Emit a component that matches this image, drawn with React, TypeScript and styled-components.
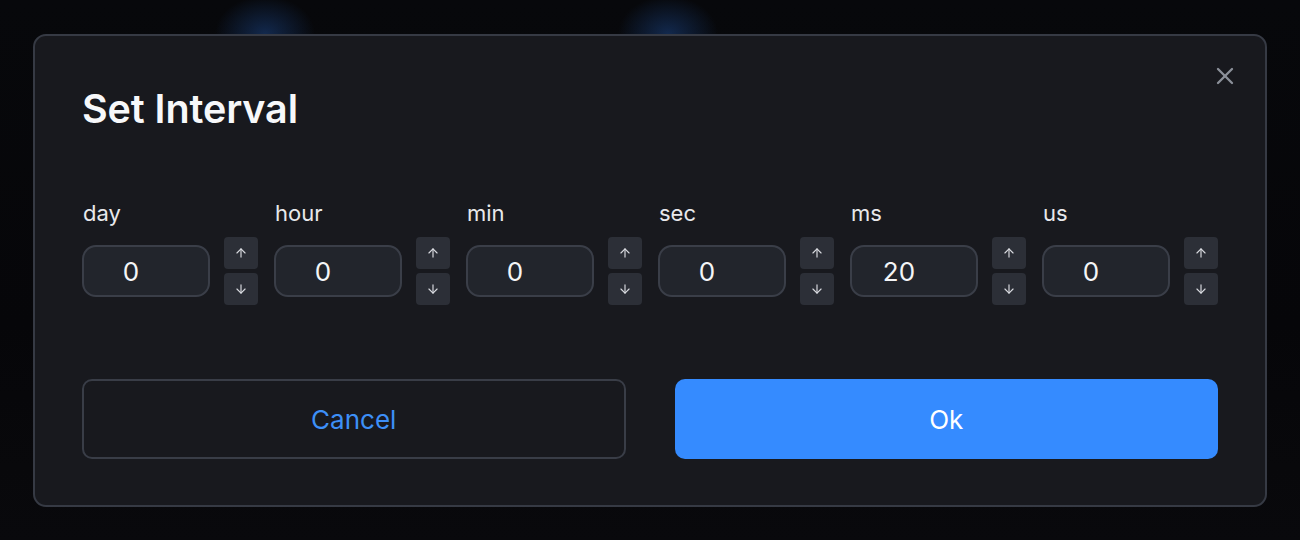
import React from "react";
import styled, { createGlobalStyle } from "styled-components";
import { ArrowUp, ArrowDown, X } from "lucide-react";

const GlobalStyle = createGlobalStyle`
  html, body {
    margin: 0;
    padding: 0;
    height: 100%;
  }

  body {
    font-family: Inter, "Noto Sans", sans-serif;
    background-color: #060609;
    background-image:
      radial-gradient(ellipse 50px 38px at 265px 34px, rgba(22, 52, 100, 0.75), rgba(22, 52, 100, 0) 100%),
      radial-gradient(ellipse 50px 38px at 668px 34px, rgba(22, 52, 100, 0.75), rgba(22, 52, 100, 0) 100%),
      linear-gradient(180deg, #07080b 0%, #060609 60%, #09090c 100%);
    background-repeat: no-repeat;
  }

  #root {
    width: 1300px;
    height: 540px;
  }
`;

const Page = styled.div`
  width: 1300px;
  height: 540px;
  padding: 34px 33px 33px;
  box-sizing: border-box;
`;

const Dialog = styled.div`
  position: relative;
  height: 473px;
  box-sizing: border-box;
  background: #18191e;
  border: 2px solid #363a44;
  border-radius: 13px;
  padding: 50px 47px 0;
  display: flex;
  flex-direction: column;
`;

const CloseButton = styled.button`
  position: absolute;
  top: 24px;
  right: 24px;
  width: 32px;
  height: 32px;
  padding: 0;
  border: none;
  background: transparent;
  color: #8b9099;
  display: flex;
  align-items: center;
  justify-content: center;
  cursor: pointer;
`;

const Title = styled.h2`
  margin: 0;
  font-size: 39.5px;
  line-height: 47px;
  font-weight: 600;
  color: #f7f8fa;
  letter-spacing: -0.1px;
`;

const Fields = styled.div`
  display: grid;
  grid-template-columns: repeat(6, 176px);
  column-gap: 16px;
  margin-top: 67px;
`;

const Field = styled.div`
  display: flex;
  flex-direction: column;
`;

const Label = styled.label`
  font-size: 22px;
  line-height: 27px;
  color: #e8e9ec;
  margin-left: 1px;
`;

const Control = styled.div`
  display: flex;
  align-items: center;
  gap: 14px;
  margin-top: 10px;
`;

const ValueBox = styled.div`
  width: 128px;
  height: 52px;
  box-sizing: border-box;
  background: #22252c;
  border: 2px solid #3a3e48;
  border-radius: 14px;
  display: flex;
  align-items: center;
  padding-right: 30px;
  justify-content: center;
  font-size: 26px;
  color: #f4f5f7;
`;

const Spinner = styled.div`
  display: flex;
  flex-direction: column;
  gap: 4px;
`;

const SpinButton = styled.button`
  width: 34px;
  height: 32px;
  padding: 0;
  border: none;
  border-radius: 4px;
  background: #2c2f37;
  color: #d9dbe0;
  display: flex;
  align-items: center;
  justify-content: center;
  cursor: pointer;
`;

const Actions = styled.div`
  display: grid;
  grid-template-columns: 1fr 1fr;
  column-gap: 49px;
  margin-top: 74px;
`;

const ActionButton = styled.button<{ $primary?: boolean }>`
  height: 80px;
  box-sizing: border-box;
  border-radius: 10px;
  font-family: Inter, "Noto Sans", sans-serif;
  font-size: 26px;
  font-weight: 400;
  cursor: pointer;
  background: ${(p) => (p.$primary ? "#358bff" : "transparent")};
  color: ${(p) => (p.$primary ? "#ffffff" : "#3d8ff7")};
  border: ${(p) => (p.$primary ? "none" : "2px solid #393d47")};
`;

const fields = [
  { label: "day", value: "0" },
  { label: "hour", value: "0" },
  { label: "min", value: "0" },
  { label: "sec", value: "0" },
  { label: "ms", value: "20" },
  { label: "us", value: "0" },
];

const App: React.FC = () => {
  return (
    <>
      <GlobalStyle />
      <Page>
        <Dialog>
          <CloseButton aria-label="Close">
            <X size={28} strokeWidth={2} />
          </CloseButton>
          <Title>Set Interval</Title>
          <Fields>
            {fields.map((f) => (
              <Field key={f.label}>
                <Label>{f.label}</Label>
                <Control>
                  <ValueBox>{f.value}</ValueBox>
                  <Spinner>
                    <SpinButton aria-label="increase">
                      <ArrowUp size={14} strokeWidth={2} />
                    </SpinButton>
                    <SpinButton aria-label="decrease">
                      <ArrowDown size={14} strokeWidth={2} />
                    </SpinButton>
                  </Spinner>
                </Control>
              </Field>
            ))}
          </Fields>
          <Actions>
            <ActionButton>Cancel</ActionButton>
            <ActionButton $primary>Ok</ActionButton>
          </Actions>
        </Dialog>
      </Page>
    </>
  );
};

export default App;
